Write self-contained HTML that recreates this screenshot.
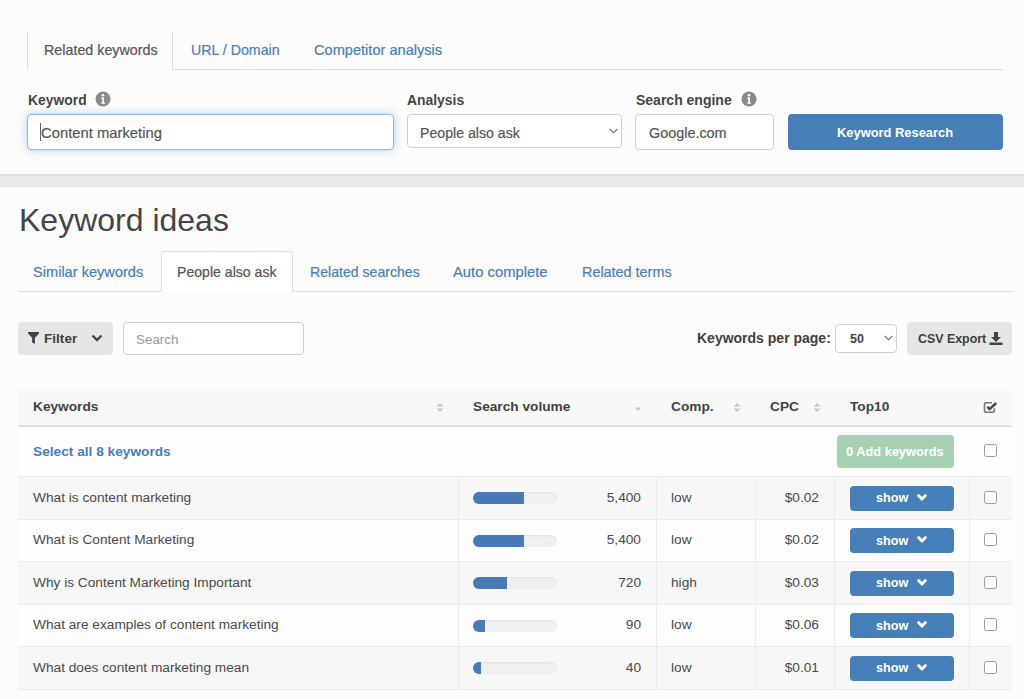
<!DOCTYPE html>
<html><head><meta charset="utf-8">
<style>
*{box-sizing:border-box;margin:0;padding:0}
html,body{width:1024px;height:699px;overflow:hidden;background:#fcfcfc;font-family:"Liberation Sans",sans-serif;position:relative}
.a{position:absolute;white-space:nowrap;line-height:1}
.link{color:#4a7db6}
.os{-webkit-text-stroke:0.2px currentColor}
.lbl{font-weight:bold;color:#454545}
.box{position:absolute;border:1px solid #cfcfcf;border-radius:4px;background:#fff}
.sep{position:absolute;left:0;top:174px;width:1024px;height:13px;background:#ebebeb;border-top:2px solid #dedede;border-bottom:1px solid #e4e4e4}
.tt{font-size:13.7px;color:#4a4a4a}
.th{font-size:13.7px;font-weight:bold;color:#424242}
.btn{position:absolute;border-radius:4px;background:#4780b9;color:#fff;font-weight:bold}
.vl{position:absolute;width:1px;background:#e6e6e6}
.cb{position:absolute;width:13px;height:13px;border:1.5px solid #9a9a9a;border-radius:2.5px;background:#fff}
.track{position:absolute;left:473px;width:84px;height:12px;border-radius:6px;background:#f0f0f0;box-shadow:inset 0 1px 2px rgba(0,0,0,.06);overflow:hidden}
.fill{position:absolute;left:0;top:0;height:12px;background:#4a7ab5}
</style></head><body><div id="root" style="position:absolute;left:0;top:0;width:1024px;height:699px;overflow:hidden">

<!-- top tabs -->
<div style="position:absolute;left:27px;top:31px;width:146px;height:39px;border-left:1px solid #dedede;border-right:1px solid #dedede;background:#fcfcfc"></div>
<div style="position:absolute;left:173px;top:69px;width:830px;height:1px;background:#dedede"></div>
<div class="a os" style="left:44px;top:42.5px;font-size:14.3px;color:#555">Related keywords</div>
<div class="a link os" style="left:191px;top:43px;font-size:14.2px">URL / Domain</div>
<div class="a link os" style="left:314px;top:43px;font-size:14.6px">Competitor analysis</div>

<!-- labels -->
<div class="a lbl" style="left:28px;top:94px;font-size:13.9px">Keyword</div>
<div class="a lbl" style="left:407px;top:94px;font-size:13.9px">Analysis</div>
<div class="a lbl" style="left:636px;top:92.5px;font-size:14px">Search engine</div>
<svg style="position:absolute;left:95px;top:91px" width="16" height="16" viewBox="0 0 16 16"><circle cx="8" cy="8" r="7.5" fill="#8a8a8a"/><circle cx="8" cy="4.3" r="1.3" fill="#fff"/><path d="M6.3 6.6h2.7v4.8h1v1.3H6.3v-1.3h1v-3.5h-1z" fill="#fff"/></svg>
<svg style="position:absolute;left:741px;top:91px" width="16" height="16" viewBox="0 0 16 16"><circle cx="8" cy="8" r="7.5" fill="#8a8a8a"/><circle cx="8" cy="4.3" r="1.3" fill="#fff"/><path d="M6.3 6.6h2.7v4.8h1v1.3H6.3v-1.3h1v-3.5h-1z" fill="#fff"/></svg>

<!-- inputs -->
<div class="box" style="left:27px;top:114px;width:367px;height:36px;border-color:#88b9e8;box-shadow:0 0 8px rgba(102,170,233,.5)"></div>
<div style="position:absolute;left:40px;top:123px;width:1px;height:18px;background:#666"></div>
<div class="a os" style="left:41px;top:126px;font-size:14.8px;color:#555">Content marketing</div>
<div class="box" style="left:407px;top:114px;width:215px;height:34px"></div>
<div class="a os" style="left:420px;top:126px;font-size:14.15px;color:#555">People also ask</div>
<svg style="position:absolute;left:609px;top:128px" width="9" height="6" viewBox="0 0 9 6"><path d="M0.5 0.8L4.5 4.8L8.5 0.8" stroke="#666" stroke-width="1.1" fill="none"/></svg>
<div class="box" style="left:635px;top:114px;width:139px;height:36px"></div>
<div class="a os" style="left:649px;top:126px;font-size:14.4px;color:#555">Google.com</div>
<div class="btn" style="left:788px;top:114px;width:215px;height:36px"></div>
<div class="a" style="left:837px;top:127px;font-size:12.9px;font-weight:bold;color:#fff">Keyword Research</div>

<div class="sep"></div>

<!-- heading -->
<div class="a" style="left:19px;top:203.5px;font-size:32px;color:#454545">Keyword ideas</div>

<!-- tabs 2 -->
<div style="position:absolute;left:18px;top:291px;width:995px;height:1px;background:#dedede"></div>
<div style="position:absolute;left:161px;top:251px;width:132px;height:41px;border:1px solid #dedede;border-bottom:none;border-radius:4px 4px 0 0;background:#fff"></div>
<div class="a link os" style="left:33px;top:264.5px;font-size:14.6px">Similar keywords</div>
<div class="a os" style="left:177px;top:264.5px;font-size:14.1px;color:#555">People also ask</div>
<div class="a link os" style="left:310px;top:264.5px;font-size:14.1px">Related searches</div>
<div class="a link os" style="left:453px;top:264.5px;font-size:14.8px">Auto complete</div>
<div class="a link os" style="left:582px;top:264.5px;font-size:14.4px">Related terms</div>

<!-- filter row -->
<div style="position:absolute;left:18px;top:322px;width:95px;height:33px;border-radius:4px;background:#e6e6e6"></div>
<svg style="position:absolute;left:28px;top:332px" width="11" height="12" viewBox="0 0 11 12"><path d="M0 0H11V1.6L6.9 5.8V12L4.1 10.4V5.8L0 1.6Z" fill="#444"/></svg>
<div class="a lbl" style="left:44px;top:332px;font-size:13.6px;color:#404040">Filter</div>
<svg style="position:absolute;left:91px;top:334px" width="12" height="8" viewBox="0 0 12 8"><path d="M1.5 1.5L6 6L10.5 1.5" stroke="#444" stroke-width="2.4" fill="none"/></svg>
<div class="box" style="left:123px;top:322px;width:181px;height:33px"></div>
<div class="a" style="left:136px;top:333px;font-size:13.4px;color:#9a9a9a">Search</div>

<div class="a lbl" style="left:697px;top:331px;font-size:14px;color:#404040">Keywords per page:</div>
<div class="box" style="left:835px;top:324px;width:62px;height:29px"></div>
<div class="a" style="left:850px;top:333px;font-size:12.5px;font-weight:bold;color:#444">50</div>
<svg style="position:absolute;left:884px;top:335px" width="9" height="6" viewBox="0 0 9 6"><path d="M0.5 0.8L4.5 4.8L8.5 0.8" stroke="#666" stroke-width="1.1" fill="none"/></svg>
<div style="position:absolute;left:907px;top:322px;width:105px;height:33px;border-radius:4px;background:#e6e6e6"></div>
<div class="a lbl" style="left:918px;top:333px;font-size:12.4px;color:#404040">CSV Export</div>
<svg style="position:absolute;left:989px;top:332px" width="14" height="13" viewBox="0 0 14 13"><path d="M5 0h4v5h3L7 10 2 5h3z" fill="#444"/><rect x="0.5" y="10.5" width="13" height="2.5" fill="#444"/></svg>

<!-- table -->
<div style="position:absolute;left:18px;top:390px;width:994px;height:37px;background:#f8f8f8;border-bottom:2px solid #e0e0e0"></div>
<div class="a th" style="left:33px;top:400px">Keywords</div>
<div class="a th" style="left:473px;top:400px">Search volume</div>
<div class="a th" style="left:671px;top:400px">Comp.</div>
<div class="a th" style="left:770px;top:400px">CPC</div>
<div class="a th" style="left:850px;top:400px">Top10</div>
<svg style="position:absolute;left:436px;top:403px" width="8" height="9" viewBox="0 0 8 9"><path d="M4 0L7.5 3.5H0.5z M4 9L7.5 5.5H0.5z" fill="#c8c8c8"/></svg>
<svg style="position:absolute;left:733px;top:403px" width="8" height="9" viewBox="0 0 8 9"><path d="M4 0L7.5 3.5H0.5z M4 9L7.5 5.5H0.5z" fill="#c8c8c8"/></svg>
<svg style="position:absolute;left:813px;top:403px" width="8" height="9" viewBox="0 0 8 9"><path d="M4 0L7.5 3.5H0.5z M4 9L7.5 5.5H0.5z" fill="#c8c8c8"/></svg>
<svg style="position:absolute;left:634px;top:407px" width="8" height="5" viewBox="0 0 8 5"><path d="M0.5 0.5H7.5L4 4z" fill="#c8c8c8"/></svg>
<svg style="position:absolute;left:983px;top:401px" width="15" height="13" viewBox="0 0 15 13"><path d="M11.3 7.3V9.8Q11.3 11.3 9.8 11.3H3Q1.5 11.3 1.5 9.8V3.3Q1.5 1.8 3 1.8H9" stroke="#777" stroke-width="1.6" fill="none"/><path d="M4.3 5.9L6.6 8.1L13.2 2" stroke="#444" stroke-width="2.4" fill="none"/></svg>
<div style="position:absolute;left:18px;top:427px;width:994px;height:49px;background:#fdfdfd"></div>
<div class="a th" style="left:33px;top:444.5px;color:#4a7db6">Select all 8 keywords</div>
<div style="position:absolute;left:837px;top:435px;width:117px;height:33px;border-radius:4px;background:#a6d1b3"></div>
<div class="a" style="left:846px;top:446px;font-size:12.8px;font-weight:bold;color:#fff">0 Add keywords</div>
<div class="cb" style="left:984px;top:444px"></div>
<div style="position:absolute;left:18px;top:476px;width:994px;height:42.5px;background:#f7f7f7;border-top:1px solid #ebebeb"></div>
<div class="vl" style="left:458px;top:476px;height:42.5px;background:#ebebeb"></div>
<div class="vl" style="left:656px;top:476px;height:42.5px;background:#ebebeb"></div>
<div class="vl" style="left:755px;top:476px;height:42.5px;background:#ebebeb"></div>
<div class="vl" style="left:834px;top:476px;height:42.5px;background:#ebebeb"></div>
<div class="vl" style="left:969px;top:476px;height:42.5px;background:#ebebeb"></div>
<div class="a tt" style="left:33px;top:490.5px">What is content marketing</div>
<div class="track" style="top:492px"><div class="fill" style="width:51px"></div></div>
<div class="a tt" style="right:383px;top:490.5px">5,400</div>
<div class="a tt" style="left:671px;top:490.5px">low</div>
<div class="a tt" style="right:205px;top:490.5px">$0.02</div>
<div class="btn" style="left:850px;top:485.5px;width:104px;height:25px"></div>
<div class="a" style="left:876px;top:492px;font-size:12.6px;font-weight:bold;color:#fff">show</div>
<svg style="position:absolute;left:916px;top:492.8px" width="12" height="8" viewBox="0 0 12 8"><path d="M1.8 1.8L6 6L10.2 1.8" stroke="#fff" stroke-width="2.8" fill="none"/></svg>
<div class="cb" style="left:984px;top:490.6px"></div>
<div style="position:absolute;left:18px;top:518.5px;width:994px;height:42.5px;background:#fdfdfd;border-top:1px solid #ebebeb"></div>
<div class="vl" style="left:458px;top:518.5px;height:42.5px;background:#ebebeb"></div>
<div class="vl" style="left:656px;top:518.5px;height:42.5px;background:#ebebeb"></div>
<div class="vl" style="left:755px;top:518.5px;height:42.5px;background:#ebebeb"></div>
<div class="vl" style="left:834px;top:518.5px;height:42.5px;background:#ebebeb"></div>
<div class="vl" style="left:969px;top:518.5px;height:42.5px;background:#ebebeb"></div>
<div class="a tt" style="left:33px;top:533.0px">What is Content Marketing</div>
<div class="track" style="top:534.5px"><div class="fill" style="width:51px"></div></div>
<div class="a tt" style="right:383px;top:533.0px">5,400</div>
<div class="a tt" style="left:671px;top:533.0px">low</div>
<div class="a tt" style="right:205px;top:533.0px">$0.02</div>
<div class="btn" style="left:850px;top:528.0px;width:104px;height:25px"></div>
<div class="a" style="left:876px;top:534.5px;font-size:12.6px;font-weight:bold;color:#fff">show</div>
<svg style="position:absolute;left:916px;top:535.3px" width="12" height="8" viewBox="0 0 12 8"><path d="M1.8 1.8L6 6L10.2 1.8" stroke="#fff" stroke-width="2.8" fill="none"/></svg>
<div class="cb" style="left:984px;top:533.1px"></div>
<div style="position:absolute;left:18px;top:561px;width:994px;height:42.5px;background:#f7f7f7;border-top:1px solid #ebebeb"></div>
<div class="vl" style="left:458px;top:561px;height:42.5px;background:#ebebeb"></div>
<div class="vl" style="left:656px;top:561px;height:42.5px;background:#ebebeb"></div>
<div class="vl" style="left:755px;top:561px;height:42.5px;background:#ebebeb"></div>
<div class="vl" style="left:834px;top:561px;height:42.5px;background:#ebebeb"></div>
<div class="vl" style="left:969px;top:561px;height:42.5px;background:#ebebeb"></div>
<div class="a tt" style="left:33px;top:575.5px">Why is Content Marketing Important</div>
<div class="track" style="top:577px"><div class="fill" style="width:34px"></div></div>
<div class="a tt" style="right:383px;top:575.5px">720</div>
<div class="a tt" style="left:671px;top:575.5px">high</div>
<div class="a tt" style="right:205px;top:575.5px">$0.03</div>
<div class="btn" style="left:850px;top:570.5px;width:104px;height:25px"></div>
<div class="a" style="left:876px;top:577px;font-size:12.6px;font-weight:bold;color:#fff">show</div>
<svg style="position:absolute;left:916px;top:577.8px" width="12" height="8" viewBox="0 0 12 8"><path d="M1.8 1.8L6 6L10.2 1.8" stroke="#fff" stroke-width="2.8" fill="none"/></svg>
<div class="cb" style="left:984px;top:575.6px"></div>
<div style="position:absolute;left:18px;top:603.5px;width:994px;height:42.5px;background:#fdfdfd;border-top:1px solid #ebebeb"></div>
<div class="vl" style="left:458px;top:603.5px;height:42.5px;background:#ebebeb"></div>
<div class="vl" style="left:656px;top:603.5px;height:42.5px;background:#ebebeb"></div>
<div class="vl" style="left:755px;top:603.5px;height:42.5px;background:#ebebeb"></div>
<div class="vl" style="left:834px;top:603.5px;height:42.5px;background:#ebebeb"></div>
<div class="vl" style="left:969px;top:603.5px;height:42.5px;background:#ebebeb"></div>
<div class="a tt" style="left:33px;top:618.0px">What are examples of content marketing</div>
<div class="track" style="top:619.5px"><div class="fill" style="width:12px"></div></div>
<div class="a tt" style="right:383px;top:618.0px">90</div>
<div class="a tt" style="left:671px;top:618.0px">low</div>
<div class="a tt" style="right:205px;top:618.0px">$0.06</div>
<div class="btn" style="left:850px;top:613.0px;width:104px;height:25px"></div>
<div class="a" style="left:876px;top:619.5px;font-size:12.6px;font-weight:bold;color:#fff">show</div>
<svg style="position:absolute;left:916px;top:620.3px" width="12" height="8" viewBox="0 0 12 8"><path d="M1.8 1.8L6 6L10.2 1.8" stroke="#fff" stroke-width="2.8" fill="none"/></svg>
<div class="cb" style="left:984px;top:618.1px"></div>
<div style="position:absolute;left:18px;top:646px;width:994px;height:42.5px;background:#f7f7f7;border-top:1px solid #ebebeb"></div>
<div class="vl" style="left:458px;top:646px;height:42.5px;background:#ebebeb"></div>
<div class="vl" style="left:656px;top:646px;height:42.5px;background:#ebebeb"></div>
<div class="vl" style="left:755px;top:646px;height:42.5px;background:#ebebeb"></div>
<div class="vl" style="left:834px;top:646px;height:42.5px;background:#ebebeb"></div>
<div class="vl" style="left:969px;top:646px;height:42.5px;background:#ebebeb"></div>
<div class="a tt" style="left:33px;top:660.5px">What does content marketing mean</div>
<div class="track" style="top:662px"><div class="fill" style="width:8px"></div></div>
<div class="a tt" style="right:383px;top:660.5px">40</div>
<div class="a tt" style="left:671px;top:660.5px">low</div>
<div class="a tt" style="right:205px;top:660.5px">$0.01</div>
<div class="btn" style="left:850px;top:655.5px;width:104px;height:25px"></div>
<div class="a" style="left:876px;top:662px;font-size:12.6px;font-weight:bold;color:#fff">show</div>
<svg style="position:absolute;left:916px;top:662.8px" width="12" height="8" viewBox="0 0 12 8"><path d="M1.8 1.8L6 6L10.2 1.8" stroke="#fff" stroke-width="2.8" fill="none"/></svg>
<div class="cb" style="left:984px;top:660.6px"></div>
<div style="position:absolute;left:18px;top:688.5px;width:994px;height:1px;background:#ebebeb"></div>
</div></body></html>
